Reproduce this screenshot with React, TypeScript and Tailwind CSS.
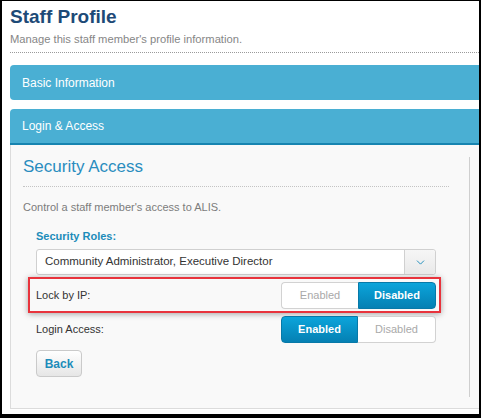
import { ChevronDown } from 'lucide-react'

const font = { fontFamily: '"Liberation Sans", Arial, sans-serif' }

function Toggle({ on }: { on: 'enabled' | 'disabled' }) {
  const active =
    'bg-gradient-to-b from-[#0ca5db] to-[#0580b3] text-white font-bold border border-[#0779a8]'
  const idle = 'bg-white text-[#a9a9a9] border border-[#d2d2d2]'
  return (
    <div className="flex h-[27px] w-[155px] text-[11px]">
      <div
        className={`flex w-[77px] items-center justify-center rounded-l-[4px] ${
          on === 'enabled' ? active : idle + ' border-r-0'
        }`}
      >
        Enabled
      </div>
      <div
        className={`flex w-[78px] items-center justify-center rounded-r-[4px] ${
          on === 'disabled' ? active : idle + ' border-l-0'
        }`}
      >
        Disabled
      </div>
    </div>
  )
}

export default function App() {
  return (
    <div
      style={font}
      className="w-[481px] h-[418px] overflow-hidden bg-white border-black border-t border-l-2 border-r-2 border-b-4"
    >
      <div className="pl-2 pt-[5px]">
        <h1 className="text-[19px] leading-[22px] font-bold text-[#1d4a77]">Staff Profile</h1>
        <p className="mt-1 text-[11.2px] leading-[14px] text-[#868686]">
          Manage this staff member's profile information.
        </p>
        <div className="mt-[6px] border-t border-dotted border-[#9a9a9a]" />

        <div className="mt-3 flex h-[35px] items-center rounded-l-[4px] bg-[#4aafd3] pl-3 text-[12px] text-white">
          Basic Information
        </div>
        <div className="mt-[9px] flex h-[36px] items-center rounded-tl-[4px] border-b-2 border-[#1784b0] bg-[#4aafd3] pl-3 text-[12px] text-white">
          Login &amp; Access
        </div>

        <div className="flex h-[264px] border-l border-b border-[#dcdcdc] bg-[#f9f9f9] pl-3 pt-3">
          <div className="h-[240px] w-[447px] border-r border-[#cfcfcf]">
            <h2 className="text-[17px] leading-[20px] text-[#2a8dbf]">Security Access</h2>
            <div className="mt-[9px] w-[426px] border-t border-dotted border-[#c4c4c4]" />
            <p className="mt-3 text-[11px] leading-4 text-[#7c7c7c]">
              Control a staff member's access to ALIS.
            </p>

            <div className="pl-[13px]">
              <div className="mt-[13px] text-[11px] leading-4 font-bold text-[#1c8cba]">Security Roles:</div>
              <div className="mt-[5px] flex h-[26px] w-[400px] rounded-[3px] border border-[#d0d0d0] bg-white">
                <div className="flex flex-1 items-center pl-2 text-[11.5px] text-[#333]">
                  Community Administrator, Executive Director
                </div>
                <div className="flex w-[31px] items-center justify-center rounded-r-[3px] border-l border-[#d0d0d0] bg-gradient-to-b from-[#f6f6f6] to-[#e9e9e9]">
                  <ChevronDown size={13} strokeWidth={1.75} className="text-[#1c8cba]" />
                </div>
              </div>
            </div>

            <div className="ml-[5px] mt-[2px] flex w-[413px] items-center justify-between border-2 border-[#e8333c] pl-[6px] pr-[3px] pt-[3px] pb-[2px] shadow-[0_1px_6px_rgba(0,0,0,0.35)]">
              <span className="text-[11px] text-[#333]">Lock by IP:</span>
              <Toggle on="disabled" />
            </div>

            <div className="ml-[13px] mt-[3px] flex w-[400px] items-center justify-between">
              <span className="text-[11px] text-[#333]">Login Access:</span>
              <Toggle on="enabled" />
            </div>

            <button className="ml-[13px] mt-[7px] h-[27px] w-[46px] rounded-[4px] border border-[#cacaca] bg-gradient-to-b from-white to-[#e6e6e6] text-[12px] font-bold text-[#1c8cba]">
              Back
            </button>
          </div>
        </div>
      </div>
    </div>
  )
}
